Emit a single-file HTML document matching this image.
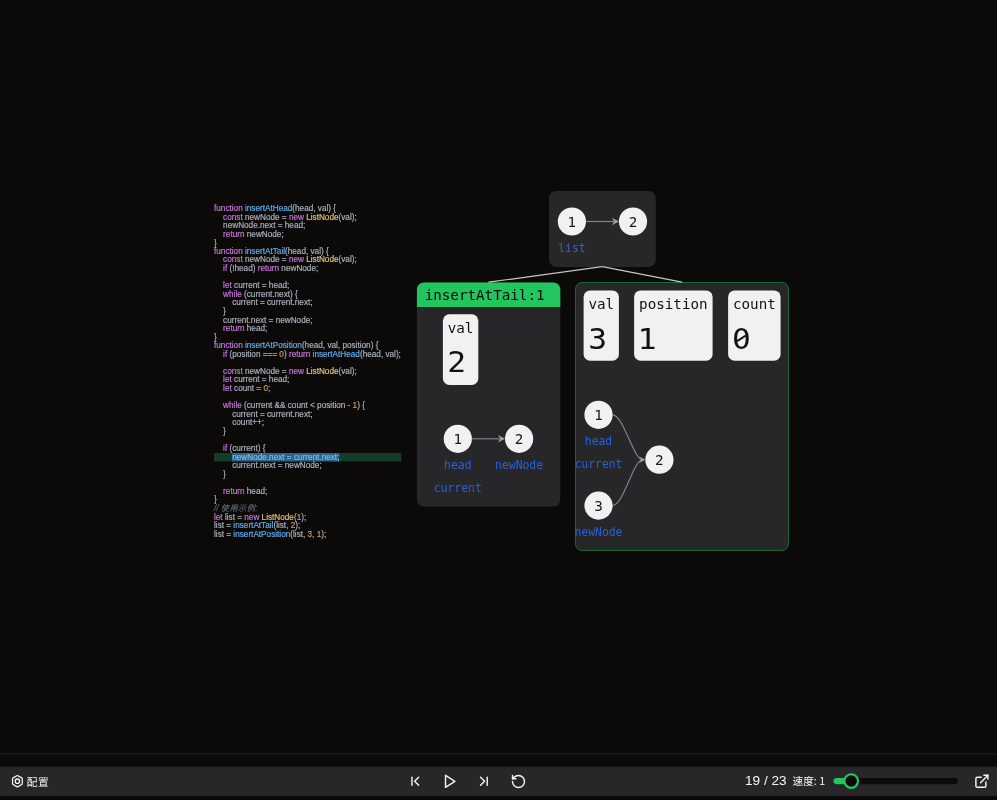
<!DOCTYPE html>
<html lang="zh">
<head>
<meta charset="utf-8">
<title>insertAtPosition</title>
<style>
*{box-sizing:border-box;margin:0;padding:0}
html,body{width:997px;height:800px;overflow:hidden;background:#0c0a09}
body{position:relative;will-change:transform;font-family:"Liberation Sans","Noto Sans CJK SC",sans-serif;color:#e4e4e7}
.abs{position:absolute}
/* code */
#code{position:absolute;left:214px;top:204.2px;width:319.66px;font-family:"Liberation Sans","Noto Sans CJK SC",sans-serif;font-size:14px;line-height:14.658px;color:#abb2bf;white-space:pre;transform:scale(0.585);transform-origin:0 0;-webkit-text-stroke:0.3px;filter:blur(0.3px)}
#code div{height:14.658px}
#code .k{color:#c678dd}
#code .f{color:#61afef}
#code .c{color:#e5c07b}
#code .n{color:#d19a66}
#code .cm{color:#5c6370;font-style:italic}
#code .hl{background:linear-gradient(#0c0a09 0,#0c0a09 0.7px,#143d29 0.7px)}
#code .sel{display:inline-block;height:14.658px;vertical-align:top;background:linear-gradient(#0c0a09 0,#0c0a09 0.7px,#25658f 0.7px);color:#93b5d1}
/* viz */
.mono{font-family:"DejaVu Sans Mono","Liberation Mono",monospace}
.panel{position:absolute;background:#27272a;border-radius:6px}
.var{position:absolute;background:#f1f1f1;border-radius:6px;color:#111;font-family:"DejaVu Sans Mono","Liberation Mono",monospace}
.var .nm{position:absolute;left:5px;top:5.5px;font-size:14.22px;line-height:16px;white-space:pre}
.var .vl{position:absolute;left:5px;bottom:5.4px;font-size:28.44px;line-height:33px;white-space:pre}
svg{position:absolute;left:0;top:0;overflow:visible}
svg text{font-family:"DejaVu Sans Mono","Liberation Mono",monospace}
/* bar */
#bar{position:absolute;left:0;top:767px;width:997px;height:29px;background:#27272a}
#sep{position:absolute;left:0;top:753px;width:997px;height:1px;background:#1b1a19}
.ico{position:absolute;width:16px;height:16px;fill:none;stroke:#f4f4f5;stroke-width:2;stroke-linecap:round;stroke-linejoin:round}
.t11{position:absolute;font-size:10.67px;line-height:16px;white-space:pre;color:#f4f4f5;font-family:"Noto Sans CJK SC","WenQuanYi Zen Hei",sans-serif}
</style>
</head>
<body>
<div id="code"><div><span class="k">function</span> <span class="f">insertAtHead</span>(head, val) {</div><div>    <span class="k">const</span> newNode = <span class="k">new</span> <span class="c">ListNode</span>(val);</div><div>    newNode.next = head;</div><div>    <span class="k">return</span> newNode;</div><div>}</div><div><span class="k">function</span> <span class="f">insertAtTail</span>(head, val) {</div><div>    <span class="k">const</span> newNode = <span class="k">new</span> <span class="c">ListNode</span>(val);</div><div>    <span class="k">if</span> (!head) <span class="k">return</span> newNode;</div><div> </div><div>    <span class="k">let</span> current = head;</div><div>    <span class="k">while</span> (current.next) {</div><div>        current = current.next;</div><div>    }</div><div>    current.next = newNode;</div><div>    <span class="k">return</span> head;</div><div>}</div><div><span class="k">function</span> <span class="f">insertAtPosition</span>(head, val, position) {</div><div>    <span class="k">if</span> (position === <span class="n">0</span>) <span class="k">return</span> <span class="f">insertAtHead</span>(head, val);</div><div> </div><div>    <span class="k">const</span> newNode = <span class="k">new</span> <span class="c">ListNode</span>(val);</div><div>    <span class="k">let</span> current = head;</div><div>    <span class="k">let</span> count = <span class="n">0</span>;</div><div> </div><div>    <span class="k">while</span> (current &amp;&amp; count &lt; position - <span class="n">1</span>) {</div><div>        current = current.next;</div><div>        count++;</div><div>    }</div><div> </div><div>    <span class="k">if</span> (current) {</div><div class="hl">        <span class="sel">newNode.next = current.next;</span></div><div>        current.next = newNode;</div><div>    }</div><div> </div><div>    <span class="k">return</span> head;</div><div>}</div><div><span class="cm">// <span style="letter-spacing:0.7px">使用示例</span>:</span></div><div><span class="k">let</span> list = <span class="k">new</span> <span class="c">ListNode</span>(<span class="n">1</span>);</div><div>list = <span class="f">insertAtTail</span>(list, <span class="n">2</span>);</div><div>list = <span class="f">insertAtPosition</span>(list, <span class="n">3</span>, <span class="n">1</span>);</div></div>

<svg width="997" height="800" viewBox="0 0 997 800">
  <!-- frames -->
  <g fill="#27272a">
    <rect x="549.1" y="190.9" width="106.7" height="76" rx="7.1"/>
    <rect x="416.9" y="282.4" width="143.4" height="224.1" rx="7"/>
    <rect x="575.45" y="282.5" width="213.1" height="268" rx="6.7" stroke="#19733d" stroke-width="0.9"/>
  </g>
  <path d="M416.9,307 V289.4 a7,7 0 0 1 7,-7 H553.3 a7,7 0 0 1 7,7 V307 Z" fill="#22c55e"/>
  <text x="424.7" y="299.8" font-size="14.22" fill="#0c0a09">insertAtTail:1</text>
  <!-- variables -->
  <g fill="#f1f1f1">
    <rect x="442.9" y="314.3" width="35.4" height="70.7" rx="6.5"/>
    <rect x="583.6" y="290.4" width="35.3" height="70.3" rx="6.5"/>
    <rect x="634.1" y="290.4" width="78.5" height="70.3" rx="6.5"/>
    <rect x="728.1" y="290.4" width="52.5" height="70.3" rx="6.5"/>
  </g>
  <g fill="#111113" font-size="14.22">
    <text x="447.7" y="332.8">val</text>
    <text x="588.4" y="309.1">val</text>
    <text x="639.1" y="309.1">position</text>
    <text x="733" y="309.1">count</text>
  </g>
  <g fill="#111113" font-size="28.44">
    <text transform="translate(447.2 372) scale(1.1 1)">2</text>
    <text transform="translate(588.2 348.6) scale(1.1 1)">3</text>
    <text transform="translate(637.4 348.6) scale(1.12 1)">1</text>
    <text transform="translate(731.9 348.6) scale(1.1 1)">0</text>
  </g>
  <ellipse cx="741.5" cy="338.3" rx="2.9" ry="4.2" fill="#f1f1f1"/>
  <line x1="737.2" y1="341.1" x2="745.8" y2="335.5" stroke="#111113" stroke-width="2" stroke-linecap="butt"/>
  <!-- tree connectors -->
  <g stroke="#c6c6c6" stroke-width="1.2" fill="none">
    <line x1="602.3" y1="266.7" x2="488.4" y2="282.2"/>
    <line x1="602.3" y1="266.7" x2="681.9" y2="282.2"/>
  </g>
  <!-- edges -->
  <g stroke="#85858c" stroke-width="1.15" fill="none">
    <line x1="586" y1="221.5" x2="614" y2="221.5"/>
    <line x1="472" y1="438.8" x2="500" y2="438.8"/>
    <path d="M612.5,414.8 C623.5,414.8 633.4,459.7 642.5,459.7"/>
    <path d="M612.5,505.6 C623.5,505.6 633.4,459.7 642.5,459.7"/>
  </g>
  <g fill="#a1a1aa">
    <path d="M619,221.5 l-7.2,-3.8 l2.4,3.8 l-2.4,3.8z"/>
    <path d="M505.1,438.8 l-7.2,-3.8 l2.4,3.8 l-2.4,3.8z"/>
    <path d="M645.4,459.7 l-6.4,-3.3 l2.2,3.3 l-2.2,3.3z"/>
  </g>
  <g fill="#f1f1f1">
    <circle cx="571.9" cy="221.5" r="14.1"/><circle cx="633" cy="221.5" r="14.1"/>
    <circle cx="457.8" cy="438.8" r="14.1"/><circle cx="519.1" cy="438.8" r="14.1"/>
    <circle cx="598.5" cy="414.8" r="14.1"/><circle cx="659.4" cy="459.7" r="14.1"/><circle cx="598.5" cy="505.6" r="14.1"/>
  </g>
  <g fill="#18181b" font-size="14.22" text-anchor="middle">
    <text x="571.9" y="226.6">1</text><text x="633" y="226.6">2</text>
    <text x="457.8" y="443.9">1</text><text x="519.1" y="443.9">2</text>
    <text x="598.5" y="419.9">1</text><text x="659.4" y="464.8">2</text><text x="598.5" y="510.7">3</text>
  </g>
  <g fill="#2860da" font-size="11.38" text-anchor="middle">
    <text x="571.9" y="251.5">list</text>
    <text x="457.8" y="468.8">head</text><text x="519.1" y="468.8">newNode</text>
    <text x="457.8" y="491.5">current</text>
    <text x="598.5" y="444.6">head</text>
    <text x="598.5" y="467.6">current</text>
    <text x="598.5" y="535.6">newNode</text>
  </g>
</svg>

<svg width="997" height="800" viewBox="0 0 997 800">
  <rect x="0" y="753.5" width="997" height="0.9" fill="#27272a"/>
  <rect x="0" y="766.6" width="997" height="29.3" fill="#27272a"/>
  <g fill="none" stroke="#f4f4f5" stroke-width="2.15" stroke-linecap="round" stroke-linejoin="round">
    <!-- settings -->
    <g transform="translate(9.4 773.2) scale(0.6667)" stroke-width="1.9"><path d="M12.9 3.8 L18.4 7.0 a1.8 1.8 0 0 1 .9 1.55 V15.45 a1.8 1.8 0 0 1 -.9 1.55 L12.9 20.2 a1.8 1.8 0 0 1 -1.8 0 L5.6 17.0 a1.8 1.8 0 0 1 -.9 -1.55 V8.55 a1.8 1.8 0 0 1 .9 -1.55 L11.1 3.8 a1.8 1.8 0 0 1 1.8 0 Z"/><circle cx="12" cy="12" r="3.3"/></g>
    <!-- first -->
    <g transform="translate(407.3 773.3) scale(0.6667)"><path d="m17 18-6-6 6-6"/><path d="M7 6v12"/></g>
    <!-- play -->
    <g transform="translate(442.2 773.3) scale(0.6667)"><polygon points="5 3 19 12 5 21 5 3"/></g>
    <!-- last -->
    <g transform="translate(475.9 773.3) scale(0.6667)"><path d="m7 18 6-6-6-6"/><path d="M17 6v12"/></g>
    <!-- reset -->
    <g transform="translate(510.5 773.5) scale(0.6667)"><path d="M3 12a9 9 0 1 0 9-9 9.75 9.75 0 0 0-6.74 2.74L3 8"/><path d="M3 3v5h5"/></g>
    <!-- external -->
    <g transform="translate(973.9 773.3) scale(0.6667)"><path d="M18 13v6a2 2 0 0 1-2 2H5a2 2 0 0 1-2-2V8a2 2 0 0 1 2-2h6"/><path d="M15 3h6v6"/><path d="M10 14 21 3"/></g>
  </g>
  <!-- slider -->
  <rect x="833.4" y="778" width="124.6" height="6.2" rx="3.1" fill="#0c0a09"/>
  <path d="M836.5,778 H851 V784.2 H836.5 a3.1,3.1 0 0 1 0,-6.2 Z" fill="#22c55e"/>
  <circle cx="851.2" cy="781.05" r="6.8" fill="#0c0a09" stroke="#22c55e" stroke-width="2.2"/>
</svg>
<div class="t11" style="left:26.7px;top:773.5px;letter-spacing:0.7px">配置</div>
<div class="abs" style="left:745px;top:773.2px;font-size:13.6px;line-height:16px;white-space:pre;color:#f4f4f5;font-family:'Liberation Sans',sans-serif">19 / 23</div>
<div class="t11" style="left:792.5px;top:773.3px">速度: 1</div>
</body>
</html>
